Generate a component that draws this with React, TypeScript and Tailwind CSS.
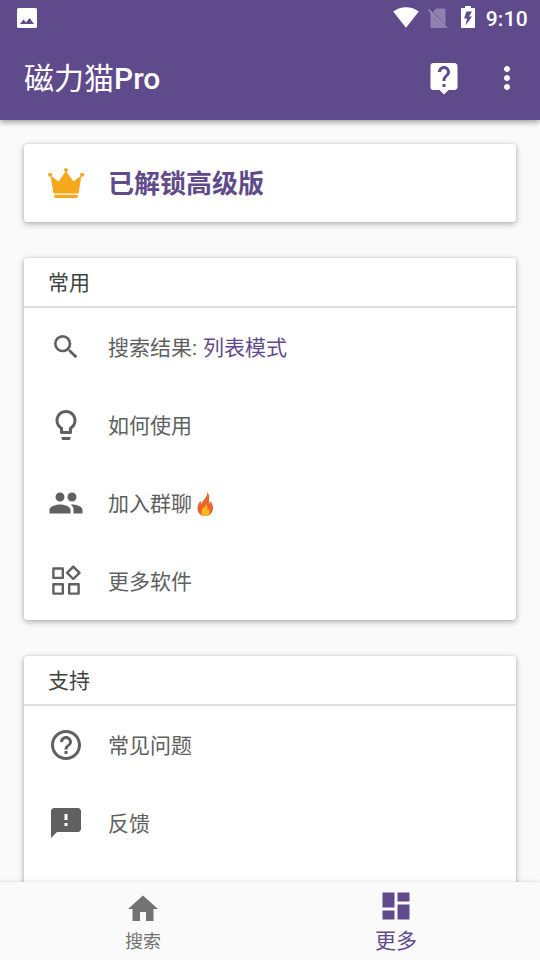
import React from 'react'
import {
  MdDashboard,
  MdFeedback,
  MdHelpOutline,
  MdHome,
  MdLightbulbOutline,
  MdLiveHelp,
  MdMoreVert,
  MdPeople,
  MdSearch,
} from 'react-icons/md'

interface RowProps {
  icon: React.ReactNode
  children: React.ReactNode
}

interface SectionProps {
  title: string
  children: React.ReactNode
}

const StatusBar = () => {
  return (
    <div className="flex h-9 items-center pl-[17px] pr-3 text-white">
      <svg width="20" height="20" viewBox="0 0 20 20">
        <path
          fill="currentColor"
          fillRule="evenodd"
          d="M1.500 0h17A1.500 1.500 0 0 1 20 1.500v17a1.500 1.500 0 0 1-1.500 1.500h-17A1.500 1.500 0 0 1 0 18.500v-17A1.500 1.500 0 0 1 1.500 0zM3 16h14l-4.500-6-3.500 4.500-2.500-3z"
        />
      </svg>
      <svg className="mb-0.5 ml-auto" width="26" height="21" viewBox="0 0 26 21">
        <path fill="currentColor" d="M13 20.700.2 4.600C4 1.700 8.300.2 13 .2s9 1.500 12.800 4.400z" />
      </svg>
      <svg className="ml-[9px]" width="20" height="21" viewBox="0 0 20 21">
        <path fill="#fff" opacity=".3" d="M8 .5H16A1.500 1.500 0 0 1 17.500 2v15L5 4z" />
        <path fill="#fff" opacity=".3" d="M2.500 4.500 17 19l-1 1H4a1.500 1.500 0 0 1-1.500-1.500z" />
        <path stroke="#fff" strokeOpacity=".35" strokeWidth="1.700" d="M.5 1.500l18.500 18.500" />
      </svg>
      <svg className="mb-0.5 ml-[13px]" width="14" height="22" viewBox="0 0 14 22">
        <path
          fill="currentColor"
          fillRule="evenodd"
          d="M4 0h6v2h3a1 1 0 0 1 1 1v18a1 1 0 0 1-1 1H1a1 1 0 0 1-1-1V3a1 1 0 0 1 1-1h3zM5.500 5.500L3 12.500h3L4.500 19.500 11 10.500H8L11 5.500z"
        />
      </svg>
      <span className="ml-[11px] pt-0.5 text-[21px] leading-none font-medium tracking-[0.25px]">9:10</span>
    </div>
  )
}

const CrownIcon = () => {
  return (
    <svg width="36" height="36" viewBox="0 0 36 36" fill="#f5a81c">
      <circle cx="2" cy="9.700" r="2" />
      <circle cx="18" cy="5" r="2" />
      <circle cx="34" cy="9.700" r="2" />
      <path d="M2.500 10.500L10.500 16.500 18 6l7.500 10.500 8-6L30.500 28.500h-25z" />
      <rect x="6.300" y="29.800" width="23.400" height="3.200" rx=".7" />
    </svg>
  )
}

const FireIcon = () => {
  return (
    <svg className="ml-1" width="20" height="26" viewBox="0 0 20 26">
      <path
        fill="#e9652f"
        d="M11 1c1 4-2 6-4 9-1 1.500-1.500 3-1.500 3L4.500 10C2 13 1.500 15 1.500 18c0 4 3.500 7 7.500 7 5 0 8-3.500 8-8 0-3-1.500-4.500-2-7-1 1-1.500 2-1.500 3C12 9 15 5 11 1z"
      />
      <path fill="#fbb81f" d="M10 13c0 3-4.500 4-4.500 8 0 2.500 1.500 4 4 4s4-2 4-4c0-1.500-.5-2.500-.5-3.500l-1.500 2C11.500 17 11.500 15 10 13z" />
    </svg>
  )
}

const AppsIcon = () => {
  return (
    <svg width="36" height="36" viewBox="0 0 36 36" fill="none" stroke="currentColor" strokeWidth="2.400" strokeLinejoin="round">
      <rect x="5.400" y="5.500" width="9.400" height="9.400" />
      <rect x="5.400" y="21.200" width="9.400" height="9.400" />
      <rect x="21.200" y="21.200" width="9.400" height="9.400" />
      <path d="M25.300 3.600l6.200 6.200-6.200 6.200-6.200-6.200z" />
    </svg>
  )
}

const Row = ({ icon, children }: RowProps) => {
  return (
    <div className="flex h-[78px] items-center px-6 text-[#606060]">
      <div className="flex w-9 justify-center">{icon}</div>
      <div className="ml-6 flex items-center pt-0.5 text-[21px] leading-none">{children}</div>
    </div>
  )
}

const Section = ({ title, children }: SectionProps) => {
  return (
    <div className="rounded-[3px] bg-white shadow-[0_2px_6px_rgba(0,0,0,0.3),0_0_2px_rgba(0,0,0,0.14)]">
      <div className="flex h-[50px] items-center border-b-2 border-[#dedede] px-6 pt-0.5 text-[21px] leading-none text-[#424242]">
        {title}
      </div>
      {children}
    </div>
  )
}

const App = () => {
  return (
    <div className="flex h-[960px] w-[540px] flex-col overflow-hidden bg-[#fafafa] font-[Roboto,'Noto_Sans_CJK_SC',sans-serif]">
      <header className="z-10 h-[120px] shrink-0 bg-[#5f4b8b] text-white shadow-[0_2px_6px_rgba(0,0,0,0.4)]">
        <StatusBar />
        <div className="flex h-[84px] items-center pl-6 pr-[15px]">
          <h1 className="pt-0.5 text-[30px] leading-none">
            磁力猫<span className="font-medium">Pro</span>
          </h1>
          <MdLiveHelp className="ml-auto" size={36} />
          <MdMoreVert className="ml-[27px]" size={36} />
        </div>
      </header>

      <main className="flex min-h-0 flex-1 flex-col gap-9 overflow-hidden px-6 pt-6">
        <div className="flex h-[78px] shrink-0 items-center rounded-[3px] bg-white px-6 shadow-[0_2px_6px_rgba(0,0,0,0.3),0_0_2px_rgba(0,0,0,0.14)]">
          <CrownIcon />
          <span className="ml-6 pt-0.5 text-[26px] leading-none font-bold text-[#5f4b8b]">已解锁高级版</span>
        </div>

        <Section title="常用">
          <Row icon={<MdSearch size={32} />}>
            搜索结果:<span className="ml-1.5 text-[#5f4b8b]">列表模式</span>
          </Row>
          <Row icon={<MdLightbulbOutline size={36} />}>如何使用</Row>
          <Row icon={<MdPeople size={36} />}>
            加入群聊
            <FireIcon />
          </Row>
          <Row icon={<AppsIcon />}>更多软件</Row>
        </Section>

        <Section title="支持">
          <Row icon={<MdHelpOutline size={36} />}>常见问题</Row>
          <Row icon={<MdFeedback size={36} />}>反馈</Row>
          <div className="h-[78px]" />
        </Section>
      </main>

      <nav className="z-10 flex h-[78px] shrink-0 justify-center bg-[#fafafa] shadow-[0_-1px_3px_rgba(0,0,0,0.1)]">
        <div className="flex w-[252px] flex-col items-center pr-0.5 pt-[9px] text-[#737373]">
          <MdHome size={36} />
          <span className="mt-1.5 text-[18px] leading-none">搜索</span>
        </div>
        <div className="flex w-[252px] flex-col items-center pt-[6px] text-[#5f4b8b]">
          <MdDashboard size={36} />
          <span className="mt-[7px] text-[21px] leading-none">更多</span>
        </div>
      </nav>
    </div>
  )
}

export default App
